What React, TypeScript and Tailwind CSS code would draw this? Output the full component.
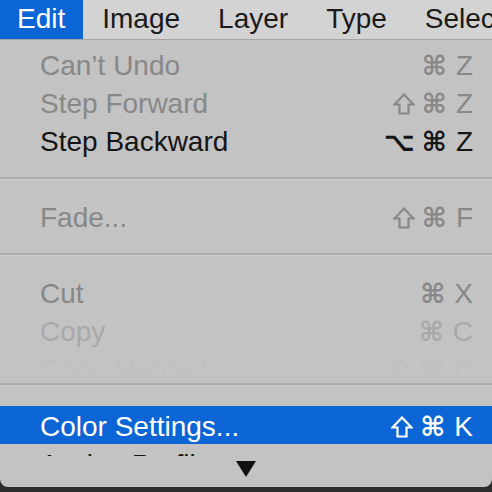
import React from 'react';

type Item = {
  label: string;
  keys: string[];
  tone?: 'on' | 'off' | 'dim' | 'ghost';
};

const FONT = { fontFamily: '"Liberation Sans", Arial, sans-serif' };
const SYM = { fontFamily: '"DejaVu Sans", sans-serif' };

const toneClass: Record<string, string> = {
  on: 'text-[#151515]',
  off: 'text-[#888888]',
  dim: 'text-[#a9a9a9]',
  ghost: 'text-[#c0c0c0]',
};

// outlined shift arrow, DejaVu's one is too narrow
const ShiftIcon = () => (
  <svg width="22" height="22" viewBox="0 0 22 22" className="shrink-0">
    <polygon
      points="11,1.5 20.5,11.5 15.5,11.5 15.5,20.5 6.5,20.5 6.5,11.5 1.5,11.5"
      fill="none"
      stroke="currentColor"
      strokeWidth="2.2"
      strokeLinejoin="miter"
    />
  </svg>
);

const Shortcut: React.FC<{ keys: string[] }> = ({ keys }) => {
  const mods = keys.slice(0, -1);
  const last = keys[keys.length - 1];
  return (
    <div className="flex items-center gap-[7px]">
      {mods.map((m, i) =>
        m === '⇧' ? (
          <ShiftIcon key={i} />
        ) : (
          <span key={i} className="text-[27px] leading-none font-bold" style={SYM}>
            {m}
          </span>
        )
      )}
      <span className="text-[28px] leading-none ml-[2px]">{last}</span>
    </div>
  );
};

const Row: React.FC<{ item: Item; active?: boolean }> = ({ item, active }) => (
  <div
    className={`h-[38px] shrink-0 flex items-center justify-between pl-[40px] pr-[19px] pt-[3px] text-[28px] ${
      active ? 'bg-[#0c65d4] text-white' : toneClass[item.tone ?? 'on']
    }`}
  >
    <span className="leading-none">{item.label}</span>
    <Shortcut keys={item.keys} />
  </div>
);

const Separator: React.FC<{ h: number; top: number }> = ({ h, top }) => (
  <div className="shrink-0" style={{ height: h, paddingTop: top }}>
    <div className="h-[2px] bg-[#adadad]" />
    <div className="h-[1px] bg-[#cbcbcb]" />
  </div>
);

const menuBar = ['Edit', 'Image', 'Layer', 'Type', 'Select'];

export default function App() {
  return (
    <div className="w-[492px] h-[492px] bg-[#2c2c2c] overflow-hidden flex flex-col" style={FONT}>
      {/* menu bar */}
      <div className="h-[40px] shrink-0 flex bg-[#d3d3d3] border-b border-[#a6a6a6] text-[28px] text-[#1a1a1a] whitespace-nowrap overflow-hidden">
        {menuBar.map((m, i) =>
          i === 0 ? (
            <div key={m} className="h-full flex items-center pl-[17px] pr-[18px] pb-[2px] bg-[#0c65d4] text-white">
              {m}
            </div>
          ) : (
            <div key={m} className="h-full flex items-center px-[19px] pb-[2px]">
              {m}
            </div>
          )
        )}
      </div>

      {/* dropdown */}
      <div className="h-[447px] shrink-0 flex flex-col bg-[#c3c3c3] rounded-b-[8px] overflow-hidden">
        <div className="h-[5px] shrink-0" />
        <Row item={{ label: 'Can’t Undo', keys: ['⌘', 'Z'], tone: 'off' }} />
        <Row item={{ label: 'Step Forward', keys: ['⇧', '⌘', 'Z'], tone: 'off' }} />
        <Row item={{ label: 'Step Backward', keys: ['⌥', '⌘', 'Z'], tone: 'on' }} />
        <Separator h={38} top={18} />
        <Row item={{ label: 'Fade...', keys: ['⇧', '⌘', 'F'], tone: 'off' }} />
        <Separator h={38} top={18} />
        <Row item={{ label: 'Cut', keys: ['⌘', 'X'], tone: 'off' }} />
        <Row item={{ label: 'Copy', keys: ['⌘', 'C'], tone: 'dim' }} />
        <div className="h-[24px] shrink-0 overflow-hidden">
          <Row item={{ label: 'Copy Merged', keys: ['⇧', '⌘', 'C'], tone: 'ghost' }} />
        </div>
        <Separator h={22} top={10} />
        <div className="h-[11px] shrink-0" />
        <Row item={{ label: 'Color Settings...', keys: ['⇧', '⌘', 'K'] }} active />
        <div className="h-[12px] shrink-0 overflow-hidden">
          <Row item={{ label: 'Assign Profile...', keys: [''], tone: 'on' }} />
        </div>
        <div className="flex-1 flex justify-center pt-[5px]">
          <svg width="20" height="16" viewBox="0 0 20 16">
            <polygon points="0,0 20,0 10,16" fill="#111111" />
          </svg>
        </div>
      </div>
    </div>
  );
}
